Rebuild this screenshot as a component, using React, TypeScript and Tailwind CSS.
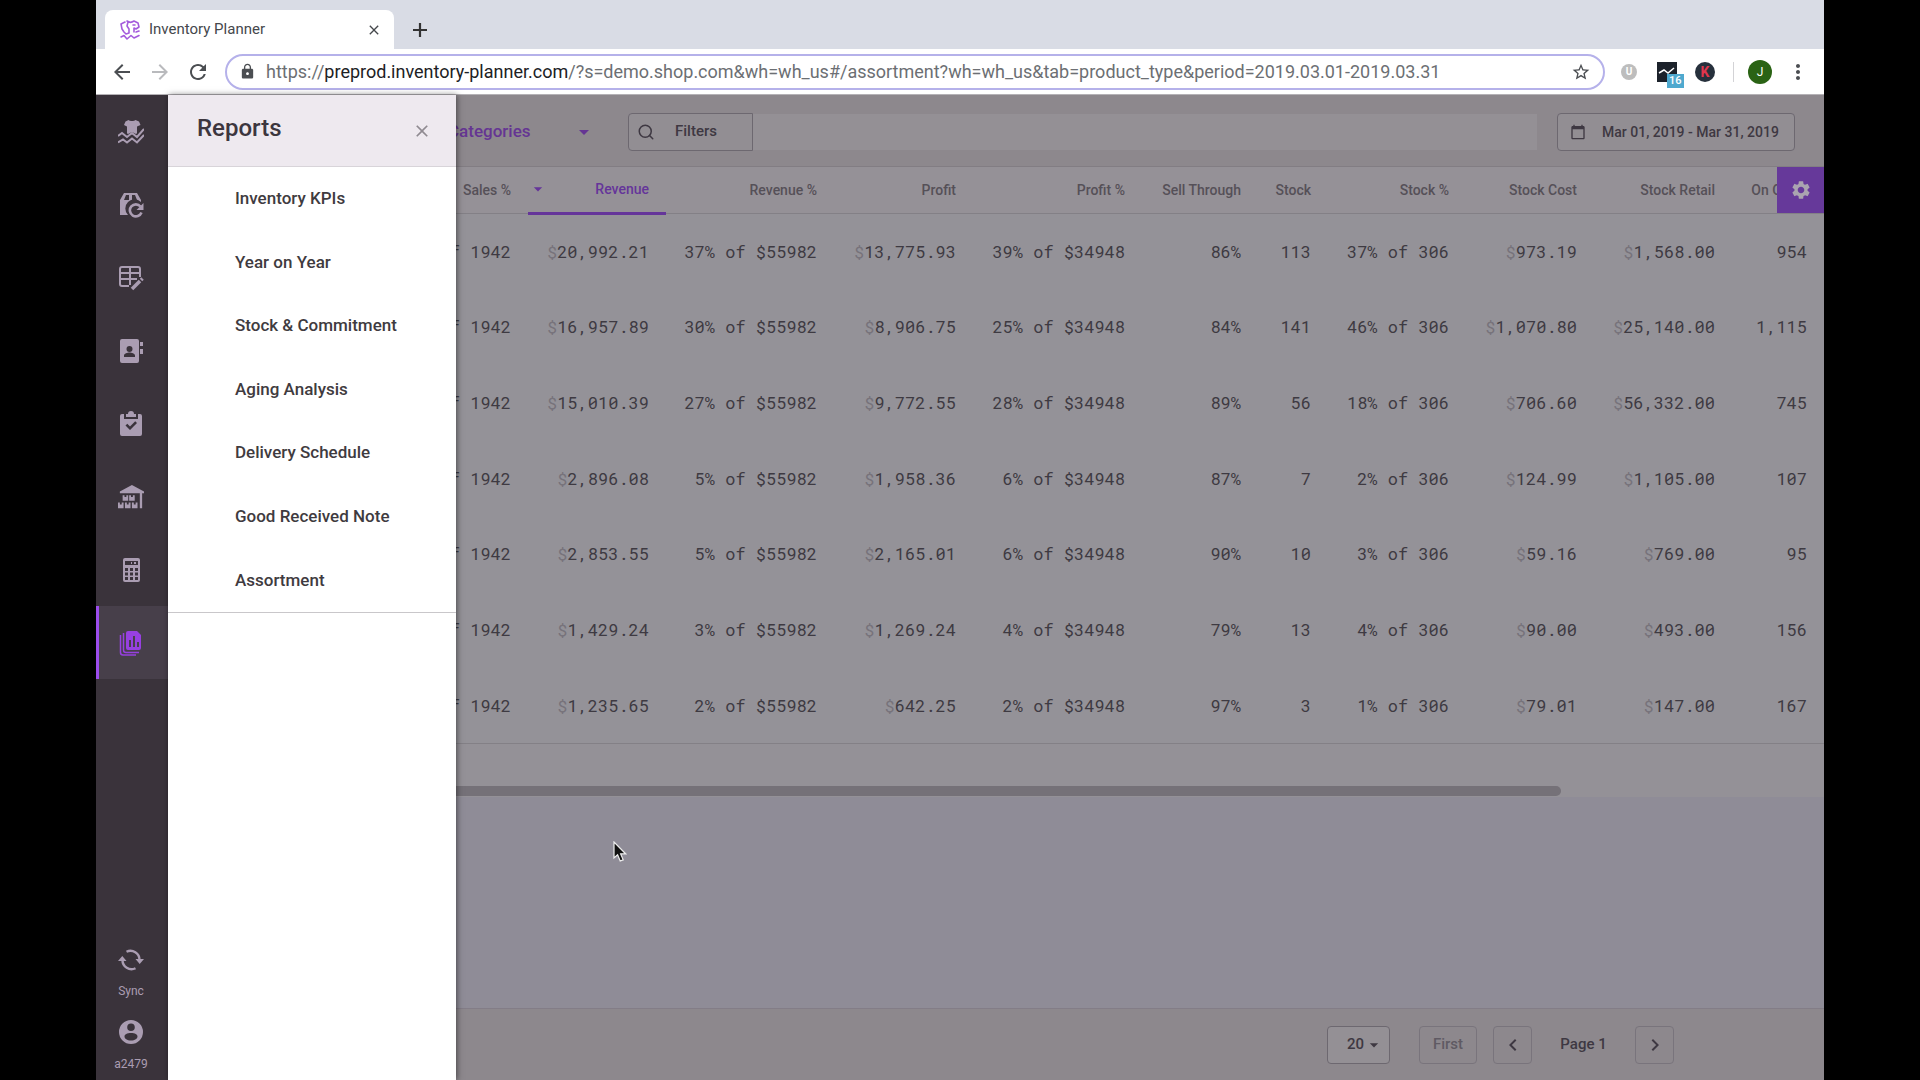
import React from 'react';
import { LuSearch } from 'react-icons/lu';
import {
  MdArrowBack,
  MdArrowDropDown,
  MdArrowForward,
  MdCalendarToday,
  MdChevronLeft,
  MdChevronRight,
  MdClose,
  MdLock,
  MdMoreVert,
  MdRefresh,
  MdSettings,
  MdStarBorder,
} from 'react-icons/md';

interface IconProps {
  className?: string;
}

interface ReportRow {
  sales: string;
  revenue: string;
  revenueShare: string;
  profit: string;
  profitShare: string;
  sellThrough: string;
  stock: string;
  stockShare: string;
  stockCost: string;
  stockRetail: string;
  onOrder: string;
}

const rows: ReportRow[] = [
  { sales: 'of 1942', revenue: '20,992.21', revenueShare: '37% of $55982', profit: '13,775.93', profitShare: '39% of $34948', sellThrough: '86%', stock: '113', stockShare: '37% of 306', stockCost: '973.19', stockRetail: '1,568.00', onOrder: '954' },
  { sales: 'of 1942', revenue: '16,957.89', revenueShare: '30% of $55982', profit: '8,906.75', profitShare: '25% of $34948', sellThrough: '84%', stock: '141', stockShare: '46% of 306', stockCost: '1,070.80', stockRetail: '25,140.00', onOrder: '1,115' },
  { sales: 'of 1942', revenue: '15,010.39', revenueShare: '27% of $55982', profit: '9,772.55', profitShare: '28% of $34948', sellThrough: '89%', stock: '56', stockShare: '18% of 306', stockCost: '706.60', stockRetail: '56,332.00', onOrder: '745' },
  { sales: 'of 1942', revenue: '2,896.08', revenueShare: '5% of $55982', profit: '1,958.36', profitShare: '6% of $34948', sellThrough: '87%', stock: '7', stockShare: '2% of 306', stockCost: '124.99', stockRetail: '1,105.00', onOrder: '107' },
  { sales: 'of 1942', revenue: '2,853.55', revenueShare: '5% of $55982', profit: '2,165.01', profitShare: '6% of $34948', sellThrough: '90%', stock: '10', stockShare: '3% of 306', stockCost: '59.16', stockRetail: '769.00', onOrder: '95' },
  { sales: 'of 1942', revenue: '1,429.24', revenueShare: '3% of $55982', profit: '1,269.24', profitShare: '4% of $34948', sellThrough: '79%', stock: '13', stockShare: '4% of 306', stockCost: '90.00', stockRetail: '493.00', onOrder: '156' },
  { sales: 'of 1942', revenue: '1,235.65', revenueShare: '2% of $55982', profit: '642.25', profitShare: '2% of $34948', sellThrough: '97%', stock: '3', stockShare: '1% of 306', stockCost: '79.01', stockRetail: '147.00', onOrder: '167' },
];

const columns: { key: keyof ReportRow; label: string; width: string; money?: boolean }[] = [
  { key: 'sales', label: 'Sales %', width: 'w-[360px]' },
  { key: 'revenue', label: 'Revenue', width: 'w-[138px]', money: true },
  { key: 'revenueShare', label: 'Revenue %', width: 'w-[168px]' },
  { key: 'profit', label: 'Profit', width: 'w-[139px]', money: true },
  { key: 'profitShare', label: 'Profit %', width: 'w-[169px]' },
  { key: 'sellThrough', label: 'Sell Through', width: 'w-[116px]' },
  { key: 'stock', label: 'Stock', width: 'w-[70px]' },
  { key: 'stockShare', label: 'Stock %', width: 'w-[138px]' },
  { key: 'stockCost', label: 'Stock Cost', width: 'w-[128px]', money: true },
  { key: 'stockRetail', label: 'Stock Retail', width: 'w-[138px]', money: true },
  { key: 'onOrder', label: 'On Order', width: 'w-auto' },
];

const reports = [
  'Inventory KPIs',
  'Year on Year',
  'Stock & Commitment',
  'Aging Analysis',
  'Delivery Schedule',
  'Good Received Note',
  'Assortment',
];

const PlannerIcon = ({ className }: IconProps) => (
  <svg viewBox="0 0 26 26" className={className} aria-hidden="true">
    <path d="M10.500 1c1.500 1.300 5.500 1.300 7 0l3.500 1.500L22.500 6 19 7.500V17l-5-2-5 2V7.500L6 6l1.500-3.500z" fill="currentColor" />
    <path d="M0 17l4-3 5 4 5-4 5 4 7-8" fill="none" stroke="#3a333b" strokeWidth="4.500" />
    <path d="M10 6h8v9l-4-2-4 2z" fill="currentColor" />
    <path
      d="M0 17l4-3 5 4 5-4 5 4 7-8M0 23.500l5-3 4 3 5-4 5 4 7-7.500"
      fill="none"
      stroke="currentColor"
      strokeWidth="2"
    />
  </svg>
);

const PlannerTabIcon = ({ className }: IconProps) => (
  <svg viewBox="0 0 22 22" className={className} fill="none" stroke="currentColor" strokeWidth="1.6" strokeLinejoin="round" strokeLinecap="round" aria-hidden="true">
    <path d="M6 3 2 5l1 5 2 3 2 2 3-1v-4L8 7l1-4M8 2c2 1.500 5 1.500 7 0l4 2 1 4-3 2-2-1v4M14 6h2" />
    <path d="M2 18l3-1.500L8 20l4-3.500 3 2.500 5-2.500M17 13l3-1" />
  </svg>
);

const ReplenishIcon = ({ className }: IconProps) => (
  <svg viewBox="0 0 26 26" className={className} aria-hidden="true">
    <path d="M6 1h13l4 7v2a9 9 0 0 0-13 13H2V8z" fill="currentColor" />
    <path d="M8 3 6 8h5V3zm6 0v5h5l-2-5z" fill="#3a333b" />
    <path d="M22.500 14.500a6 6 0 1 0 1 6" fill="none" stroke="currentColor" strokeWidth="2.600" />
    <path d="M25.500 11v7h-7z" fill="currentColor" />
  </svg>
);

const TableEditIcon = ({ className }: IconProps) => (
  <svg viewBox="0 0 26 26" className={className} fill="none" stroke="currentColor" strokeWidth="2" aria-hidden="true">
    <path d="M11 21H4a2 2 0 0 1-2-2V4a2 2 0 0 1 2-2h16a2 2 0 0 1 2 2v8M2 8h20M2 14h17M12 2v18" />
    <path d="m14 24 8-8" strokeWidth="3.600" />
    <path d="m23 15 1.500-1.500" strokeWidth="3.600" />
  </svg>
);

const ContactsIcon = ({ className }: IconProps) => (
  <svg viewBox="0 0 26 26" className={className} fill="currentColor" aria-hidden="true">
    <path
      fillRule="evenodd"
      d="M4 1h15a2 2 0 0 1 2 2v20a2 2 0 0 1-2 2H4a2 2 0 0 1-2-2V3a2 2 0 0 1 2-2zm7.500 7a3 3 0 1 0 0 6 3 3 0 0 0 0-6zM6 19h11v-1.500c0-2-3.500-3-5.500-3S6 15.500 6 17.500z"
    />
    <path d="M22 4h3v4h-3zM22 11h3v5h-3z" />
  </svg>
);

const ClipboardIcon = ({ className }: IconProps) => (
  <svg viewBox="0 0 26 26" className={className} fill="currentColor" aria-hidden="true">
    <path d="M10 3a3 3 0 0 1 6 0h2v3H8V3z" />
    <path
      fillRule="evenodd"
      d="M4 3h2v5h14V3h2a2 2 0 0 1 2 2v18a2 2 0 0 1-2 2H4a2 2 0 0 1-2-2V5a2 2 0 0 1 2-2zm3.500 11.500L12 19l7-7-1.800-1.800-5.200 5.200-2.700-2.700z"
    />
  </svg>
);

const WarehouseIcon = ({ className }: IconProps) => (
  <svg viewBox="0 0 28 26" className={className} fill="currentColor" aria-hidden="true">
    <path d="M15 0l13 7v2h-2v16h-2.500V9H2V7z" />
    <path d="M5 11h2v2h2v-2h2v6H5zM12 11h2v2h2v-2h2v6h-6zM0 19h2v2h2v-2h2v6H0zM7.500 19h2v2h2v-2h2v6h-6zM15 19h2v2h2v-2h2v6h-6z" />
  </svg>
);

const CalculatorIcon = ({ className }: IconProps) => (
  <svg viewBox="0 0 26 26" className={className} fill="currentColor" aria-hidden="true">
    <path
      fillRule="evenodd"
      d="M7 1h13a2 2 0 0 1 2 2v20a2 2 0 0 1-2 2H7a2 2 0 0 1-2-2V3a2 2 0 0 1 2-2zm0 3v4h13V4zm0 7v3h3v-3zm5 0v3h3v-3zm5 0v3h3v-3zM7 15.500v3h3v-3zm5 0v3h3v-3zm5 0v3h3v-3zM7 20v3h3v-3zm5 0v3h3v-3zm5 0v3h3v-3z"
    />
    <path d="M13 5h1v2h-1zM16 5h2v2h-2z" />
  </svg>
);

const ReportsIcon = ({ className }: IconProps) => (
  <svg viewBox="0 0 26 26" className={className} fill="currentColor" aria-hidden="true">
    <path
      fillRule="evenodd"
      d="M10 1h9l4 4v13a2 2 0 0 1-2 2H10a2 2 0 0 1-2-2V3a2 2 0 0 1 2-2zm1 9v7h2v-7zm4-4v11h2V6zm4 6v5h2v-5z"
    />
    <path
      d="M5.500 3v17a2.500 2.500 0 0 0 2.500 2.500h13M2.500 5v17.500A2.500 2.500 0 0 0 5 25h13"
      fill="none"
      stroke="currentColor"
      strokeWidth="1.500"
    />
  </svg>
);

const SyncIcon = ({ className }: IconProps) => (
  <svg viewBox="0 0 26 26" className={className} aria-hidden="true">
    <path d="M8.500 4.800A9 9 0 0 1 21.500 13M17.500 21.200A9 9 0 0 1 4.500 13" fill="none" stroke="currentColor" strokeWidth="2.400" />
    <path d="M17.500 12h8.500l-4.300 5zM0 14h8.500L4.300 9z" fill="currentColor" />
  </svg>
);

const AccountIcon = ({ className }: IconProps) => (
  <svg viewBox="0 0 24 24" className={className} fill="currentColor" aria-hidden="true">
    <path
      fillRule="evenodd"
      d="M12 0a12 12 0 1 0 0 24 12 12 0 0 0 0-24zm0 3.500a3.800 3.800 0 1 1 0 7.600 3.800 3.800 0 0 1 0-7.600zM12 13c4 0 6.500 1.500 6.500 3.500S16 20.500 12 20.500s-6.500-2-6.500-4S8 13 12 13z"
    />
  </svg>
);

const navItems = [
  { label: 'Home', icon: PlannerIcon },
  { label: 'Replenishment', icon: ReplenishIcon },
  { label: 'Planning', icon: TableEditIcon },
  { label: 'Vendors', icon: ContactsIcon },
  { label: 'Purchase Orders', icon: ClipboardIcon },
  { label: 'Warehouses', icon: WarehouseIcon },
  { label: 'Calculator', icon: CalculatorIcon },
  { label: 'Reports', icon: ReportsIcon, active: true },
];

const BrowserBar = () => (
  <header className="bg-[#d9dce5]">
    <div className="flex h-[49px] items-end pl-[9px]">
      <div className="flex h-[39px] w-[289px] items-center rounded-t-lg bg-white pl-[14px] pr-2 text-[#45484c]">
        <PlannerTabIcon className="h-[22px] w-[22px] text-[#a45bdc]" />
        <span className="ml-2 flex-1 text-[15px]">Inventory Planner</span>
        <button aria-label="Close tab" className="flex h-6 w-6 items-center justify-center">
          <MdClose className="h-4 w-4" />
        </button>
      </div>
      <button aria-label="New tab" className="ml-3 flex h-[39px] w-7 items-center justify-center text-[#333]">
        <svg viewBox="0 0 16 16" className="h-4 w-4" stroke="currentColor" strokeWidth="2.200">
          <path d="M8 1v14M1 8h14" />
        </svg>
      </button>
    </div>
    <div className="flex h-[46px] items-center border-b border-[#b5b2b6] bg-white pr-[14px] text-[#4b4e52]">
      <button aria-label="Back" className="ml-[14px]"><MdArrowBack className="h-6 w-6" /></button>
      <button aria-label="Forward" className="ml-[14px] text-[#b9babd]"><MdArrowForward className="h-6 w-6" /></button>
      <button aria-label="Reload" className="ml-[14px]"><MdRefresh className="h-6 w-6" /></button>
      <div className="ml-[15px] flex h-9 min-w-0 flex-1 items-center rounded-full border-2 border-[#b5b1ea] pl-3 pr-3">
        <MdLock className="h-[17px] w-[17px]" />
        <p className="ml-[10px] min-w-0 flex-1 truncate text-lg text-[#6c6f73]">
          https://<span className="text-[#202124]">preprod.inventory-planner.com</span>
          /?s=demo.shop.com&amp;wh=wh_us#/assortment?wh=wh_us&amp;tab=product_type&amp;period=2019.03.01-2019.03.31
        </p>
        <button aria-label="Bookmark"><MdStarBorder className="h-5 w-5" /></button>
      </div>
      <div className="ml-4 flex h-4 w-4 items-center justify-center rounded-full bg-[#bdbdbd] text-[10px] font-bold text-white">U</div>
      <div className="relative ml-5 h-5 w-5 bg-[#1c222b]">
        <svg viewBox="0 0 20 20" className="h-5 w-5" fill="none" stroke="white" strokeWidth="1.500">
          <path d="m2 11 5-3 4 3 6-5" />
        </svg>
        <span className="absolute left-[10px] top-3 bg-[#4fa9cf] px-[2px] text-[11px] font-medium leading-[14px] text-white">16</span>
      </div>
      <div className="ml-[18px] flex h-5 w-5 items-center justify-center rounded-full bg-[#26303c] text-sm font-bold text-[#e2354c]">K</div>
      <div className="ml-[18px] h-5 w-px bg-[#d3d3d6]" />
      <div className="ml-[14px] flex h-6 w-6 items-center justify-center rounded-full bg-[#2a6314] text-xs text-white">J</div>
      <button aria-label="Menu" className="ml-[14px]"><MdMoreVert className="h-6 w-6" /></button>
    </div>
  </header>
);

const Sidebar = () => (
  <nav className="flex w-[72px] shrink-0 flex-col bg-[#3a333b] text-[#aa9db2]">
    {navItems.map(({ label, icon: Icon, active }) => (
      <button
        key={label}
        aria-label={label}
        className={
          active
            ? 'flex h-[73px] items-center justify-center border-l-3 border-[#9c4dee] bg-[#473f4a] pr-[5px] text-[#9740e0]'
            : 'flex h-[73px] items-center justify-center pr-[2px]'
        }
      >
        <Icon className="h-[26px] w-[26px]" />
      </button>
    ))}
    <button className="mt-auto flex flex-col items-center gap-[10px] pb-[21px] pr-[2px] text-xs">
      <SyncIcon className="h-[26px] w-[26px]" />
      Sync
    </button>
    <button className="flex flex-col items-center gap-3 pb-2 pr-[2px] text-xs">
      <AccountIcon className="h-6 w-6" />
      a2479
    </button>
  </nav>
);

const ReportsPanel = () => (
  <aside className="absolute inset-y-0 left-[72px] z-10 w-72 bg-white shadow-[1px_0_6px_rgba(0,0,0,0.5)]">
    <div className="flex h-[72px] items-center justify-between border-b border-[#d8d4d9] bg-[#eee9ef] pl-[29px] pr-6">
      <h2 className="pb-[6px] text-2xl font-medium text-[#3c363e]">Reports</h2>
      <button aria-label="Close" className="text-[#8f8a91]"><MdClose className="h-5 w-5" /></button>
    </div>
    <ul className="flex h-[446px] flex-col border-b border-[#c9c7ca] pl-[67px]">
      {reports.map((report) => (
        <li key={report} className="flex flex-1 items-center">
          <a href="#" className="text-[17px] font-medium text-[#3f3b40]">{report}</a>
        </li>
      ))}
    </ul>
  </aside>
);

const FilterBar = () => (
  <div className="flex h-[72px] items-center border-b border-[#827d83] bg-[#8d888d] pl-[280px] pr-[29px] pt-[2px] text-[#3e3842]">
    <label className="relative flex items-center text-[#653593]">
      <select aria-label="Group by" className="w-[152px] appearance-none text-[17px] font-medium outline-none">
        <option>Categories</option>
      </select>
      <MdArrowDropDown className="pointer-events-none absolute right-1 h-6 w-6" />
    </label>
    <button className="ml-7 flex h-[38px] w-[125px] items-center rounded-l border border-[#6d6870] bg-[#928e93] pl-2 text-[15px] font-medium">
      <LuSearch className="h-[18px] w-[18px]" />
      <span className="ml-5">Filters</span>
    </button>
    <input aria-label="Filter" className="h-9 min-w-0 flex-1 bg-[#949095] outline-none" />
    <button className="ml-5 flex h-[38px] w-[238px] items-center rounded border border-[#6d6870] bg-[#928e93] pl-3 text-sm font-medium">
      <MdCalendarToday className="h-4 w-4" />
      <span className="ml-4">Mar 01, 2019 - Mar 31, 2019</span>
    </button>
  </div>
);

const AssortmentTable = () => (
  <div className="relative overflow-hidden">
    <table className="h-[576px] w-full table-fixed border-collapse bg-[#949298] text-right">
      <thead>
        <tr className="h-[46px] border-b border-[#838086] bg-[#959197] text-sm text-[#555058]">
          {columns.map(({ key, label, width }) => (
            <th
              key={key}
              className={
                key === 'revenue'
                  ? `${width} border-b-3 border-[#65359a] pr-[17px] font-medium text-[#65359a]`
                  : `${width} whitespace-nowrap pr-[17px] font-medium`
              }
            >
              {key === 'revenue' ? (
                <span className="flex items-center justify-between">
                  <MdArrowDropDown className="h-5 w-5" />
                  {label}
                </span>
              ) : (
                label
              )}
            </th>
          ))}
        </tr>
      </thead>
      <tbody className="font-['Roboto_Mono','Liberation_Mono',monospace] text-[17px] text-[#3e3a42]">
        {rows.map((row) => (
          <tr key={row.revenue} className="h-[75px]">
            {columns.map(({ key, money }) => (
              <td key={key} className="whitespace-nowrap pr-[17px] pt-px">
                {money && <span className="text-[#77737b]">$</span>}
                {row[key]}
              </td>
            ))}
          </tr>
        ))}
      </tbody>
    </table>
    <button
      aria-label="Table settings"
      className="absolute right-0 top-0 flex h-[46px] w-[47px] items-center justify-center bg-[#66399a] text-[#aaa4b0]"
    >
      <MdSettings className="h-[22px] w-[22px]" />
    </button>
  </div>
);

const Pagination = () => (
  <footer className="flex h-[72px] items-center justify-end border-t border-[#837d87] bg-[#8d888d] pr-[150px] text-[15px] font-medium text-[#3e3842]">
    <label className="relative flex items-center">
      <select aria-label="Rows per page" className="h-[38px] w-[63px] appearance-none rounded border border-[#6d6870] bg-[#949095] pl-[19px] outline-none">
        <option>20</option>
      </select>
      <MdArrowDropDown className="pointer-events-none absolute right-[6px] h-5 w-5" />
    </label>
    <button disabled className="ml-[29px] h-[38px] w-[58px] rounded border border-[#79747c] text-[#5f5a63]">First</button>
    <button aria-label="Previous page" className="ml-4 flex h-[38px] w-[39px] items-center justify-center rounded border border-[#79747c]">
      <MdChevronLeft className="h-6 w-6" />
    </button>
    <span className="w-[103px] text-center">Page 1</span>
    <button aria-label="Next page" className="flex h-[38px] w-[39px] items-center justify-center rounded border border-[#79747c]">
      <MdChevronRight className="h-6 w-6" />
    </button>
  </footer>
);

const Cursor = () => (
  <svg viewBox="0 0 14 21" className="absolute left-[517px] top-[746px] h-[21px] w-[14px]" aria-hidden="true">
    <path d="M1 1v16l3.600-3.300L7.200 20l3-1.200-2.600-6h5z" fill="#111" stroke="#eee" strokeWidth="1.200" />
  </svg>
);

const App: React.FC = () => (
  <div className="min-h-screen bg-black px-24">
    <div className="flex min-h-screen flex-col font-[Roboto,sans-serif]">
      <BrowserBar />
      <div className="relative flex flex-1">
        <Sidebar />
        <ReportsPanel />
        <main className="flex min-w-0 flex-1 flex-col bg-[#8f8c97]">
          <FilterBar />
          <AssortmentTable />
          <div className="h-[54px] border-t border-[#838086] bg-[#949197] pt-[42px]">
            <div className="mr-[263px] h-[10px] rounded-full bg-[#757178]" />
          </div>
          <div className="flex-1" />
          <Pagination />
        </main>
        <Cursor />
      </div>
    </div>
  </div>
);

export default App;
